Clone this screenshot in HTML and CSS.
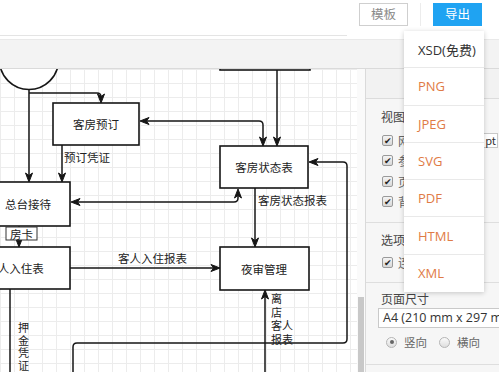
FILE: index.html
```html
<!DOCTYPE html>
<html lang="zh-CN">
<head>
<meta charset="utf-8">
<title>流程图编辑器</title>
<link rel="stylesheet" href="styles.css">
</head>
<body>
<header class="topbar">
  <div class="tabs"></div>
  <div class="actions">
    <div class="btn btn-ghost">模板</div>
    <div class="divider"></div>
    <div class="btn btn-primary">导出</div>
  </div>
</header>
<div class="toolbar"></div>
<div class="main">
  <div class="canvas">
    <svg class="diagram" width="357" height="372" viewBox="0 0 357 372" xmlns="http://www.w3.org/2000/svg">
      <g class="shapes">
        <circle cx="29" cy="60" r="29.5"/>
        <rect x="220" y="10" width="90" height="60"/>
        <rect x="53" y="103" width="86" height="42"/>
        <rect x="220" y="146" width="88" height="42"/>
        <rect x="-16" y="182" width="86" height="44"/>
        <rect x="-40" y="247" width="110" height="42"/>
        <rect x="220" y="247" width="89" height="43"/>
      </g>
      <g class="edges">
        <path d="M29 90 V176"/>
        <path d="M29 93 H97 Q101 93 101 97 V97"/>
        <path d="M62 145 V176"/>
        <path d="M146 121 H259 Q263 121 263 125 V140"/>
        <path d="M277 70 V140"/>
        <path d="M77 202 H234 Q238 202 238 198 V195"/>
        <path d="M315 162 H343 Q347 162 347 166 V339 Q347 343 343 343 H77 Q73 343 73 347 V380"/>
        <path d="M19 226 V241"/>
        <path d="M70 268 H214"/>
        <path d="M255 188 V241"/>
        <path d="M265 380 V296"/>
        <path d="M10 289 V380"/>
      </g>
      <g class="heads">
        <path d="M29 182 L25.5 173 L29 175.5 L32.5 173 Z"/>
        <path d="M101 103 L97.5 94 L101 96.5 L104.5 94 Z"/>
        <path d="M62 182 L58.5 173 L62 175.5 L65.5 173 Z"/>
        <path d="M140 121 L149 117.5 L146.5 121 L149 124.5 Z"/>
        <path d="M263 146 L259.5 137 L263 139.5 L266.5 137 Z"/>
        <path d="M277 146 L273.5 137 L277 139.5 L280.5 137 Z"/>
        <path d="M71 202 L80 198.5 L77.5 202 L80 205.5 Z"/>
        <path d="M238 189 L234.5 198 L238 195.5 L241.5 198 Z"/>
        <path d="M309 162 L318 158.5 L315.5 162 L318 165.5 Z"/>
        <path d="M19 247 L15.5 238 L19 240.5 L22.5 238 Z"/>
        <path d="M220 268 L211 264.5 L213.5 268 L211 271.5 Z"/>
        <path d="M255 247 L251.5 238 L255 240.5 L258.5 238 Z"/>
        <path d="M265 290 L261.5 299 L265 296.5 L268.5 299 Z"/>
      </g>
      <rect class="tag" x="6" y="227" width="31" height="13"/>
      <g class="labels">
        <text class="mid" x="96" y="124">客房预订</text>
        <text class="mid" x="264" y="167">客房状态表</text>
        <text class="mid" x="28" y="204">总台接待</text>
        <text class="mid" x="15" y="268">客人入住表</text>
        <text class="mid" x="264" y="269">夜审管理</text>
        <text class="mid" x="21.5" y="233.5">房卡</text>
        <text class="left" x="64" y="157">预订凭证</text>
        <text class="left" x="258" y="200">客房状态报表</text>
        <text class="left" x="118" y="258">客人入住报表</text>
        <text class="left stack" x="271" y="298">离</text>
        <text class="left stack" x="271" y="311.5">店</text>
        <text class="left stack" x="271" y="325">客人</text>
        <text class="left stack" x="271" y="338.5">报表</text>
        <text class="left stack" x="18" y="327">押</text>
        <text class="left stack" x="18" y="339.5">金</text>
        <text class="left stack" x="18" y="352">凭</text>
        <text class="left stack" x="18" y="364.5">证</text>
      </g>
    </svg>
  </div>
  <div class="scroll"><div class="thumb"></div></div>
  <aside class="panel">
    <div class="p-head"></div>
    <section class="sec sec-view">
      <div class="sec-title">视图</div>
      <div class="rows">
        <label class="row"><span class="cb">✔</span><span class="txt">网格</span><span class="size">10 pt</span><span class="size2">3</span></label>
        <label class="row"><span class="cb">✔</span><span class="txt">参考线</span></label>
        <label class="row"><span class="cb">✔</span><span class="txt">页面视图</span></label>
        <label class="row"><span class="cb">✔</span><span class="txt">背景</span></label>
      </div>
    </section>
    <section class="sec sec-opt">
      <div class="sec-title">选项</div>
      <label class="row"><span class="cb">✔</span><span class="txt">连接箭头</span></label>
    </section>
    <section class="sec sec-page">
      <div class="sec-title">页面尺寸</div>
      <div class="select">A4 (210 mm x 297 mm)</div>
      <div class="radios">
        <span class="radio on"></span><span class="rtxt">竖向</span>
        <span class="radio"></span><span class="rtxt">横向</span>
      </div>
    </section>
  </aside>
</div>
<ul class="menu">
  <li class="menu-item first">XSD(免费)</li>
  <li class="menu-item">PNG</li>
  <li class="menu-item">JPEG</li>
  <li class="menu-item">SVG</li>
  <li class="menu-item">PDF</li>
  <li class="menu-item">HTML</li>
  <li class="menu-item last">XML</li>
</ul>
</body>
</html>
```
FILE: styles.css
```css
* { box-sizing: border-box; }

body {
  margin: 0;
  width: 499px;
  height: 372px;
  overflow: hidden;
  position: relative;
  background: #fff;
  font-family: "Noto Sans CJK SC", "Open Sans", sans-serif;
  color: #333;
}

/* top bar */
.topbar {
  height: 39px;
  display: flex;
  align-items: flex-start;
  background: #fff;
}
.tabs {
  width: 347px;
  height: 36px;
  border-bottom: 1px solid #e4e4e4;
}
.actions {
  display: flex;
  gap: 12px;
  margin-left: 12px;
  padding-top: 3px;
}
.btn {
  width: 49px;
  height: 23px;
  display: flex;
  align-items: center;
  justify-content: center;
  font-size: 12.5px;
  line-height: 1;
}
.btn-ghost {
  border: 1px solid #cfcfcf;
  color: #8a8a8a;
  background: #fff;
}
.btn-primary {
  background: #1fa3f2;
  color: #fff;
}
.divider {
  width: 1px;
  height: 23px;
  background: #ececec;
}

/* toolbar */
.toolbar {
  height: 30px;
  background: #f3f3f3;
  border-top: 1px solid #e9e9e9;
  border-bottom: 1px solid #dadada;
}

/* main */
.main {
  display: flex;
  height: 303px;
}
.canvas {
  width: 357px;
  flex: none;
  position: relative;
  overflow: hidden;
  background-color: #fff;
  background-image:
    linear-gradient(#ececec 1px, transparent 1px),
    linear-gradient(90deg, #ececec 1px, transparent 1px);
  background-size: 14px 14px;
  background-position: 0 0;
}
.diagram {
  position: absolute;
  left: 0;
  top: -69px;
}
.shapes circle,
.shapes rect {
  fill: #fff;
  stroke: #161616;
  stroke-width: 1.6;
}
.edges path {
  fill: none;
  stroke: #161616;
  stroke-width: 1.5;
}
.heads path {
  fill: #161616;
  stroke: #161616;
  stroke-width: 1;
  stroke-linejoin: miter;
}
.tag {
  fill: #fff;
  stroke: #333;
  stroke-width: 1;
}
.labels text {
  font-family: "Noto Sans CJK SC", sans-serif;
  font-size: 11.5px;
  fill: #222;
  dominant-baseline: central;
}
.labels .mid { text-anchor: middle; }
.labels .left { text-anchor: start; }
.labels .stack { font-size: 11px; }

/* scrollbar */
.scroll {
  width: 8px;
  flex: none;
  background: #fafafa;
  display: flex;
  flex-direction: column;
  justify-content: flex-end;
}
.thumb {
  width: 6px;
  height: 75px;
  margin-left: 1px;
  background: #c8c8c8;
}

/* side panel */
.panel {
  flex: 1;
  min-width: 0;
  overflow: hidden;
  background: #f6f6f6;
  border-left: 1px solid #dadada;
  font-size: 12px;
  color: #555;
}
.p-head {
  height: 30px;
  background: #f2f2f2;
  border-bottom: 1px solid #dcdcdc;
}
.sec {
  padding-left: 15px;
  border-bottom: 1px solid #dedede;
}
.sec-title {
  height: 16px;
  line-height: 16px;
  font-size: 12px;
  color: #444;
  white-space: nowrap;
}
.sec-view { padding-top: 10px; padding-bottom: 10px; }
.sec-view .rows { margin-top: 5px; }
.sec-view .row { height: 20.5px; }
.sec-opt { padding-top: 9px; padding-bottom: 10px; }
.sec-opt .row { margin-top: 4px; height: 20px; }
.sec-page { padding-top: 8px; padding-bottom: 13px; }

.row {
  display: flex;
  align-items: center;
  white-space: nowrap;
}
.cb {
  width: 11px;
  height: 11px;
  flex: none;
  margin-left: 1px;
  border: 1px solid #9a9a9a;
  border-radius: 2px;
  background: linear-gradient(#f4f4f4, #d8d8d8);
  font-size: 9px;
  line-height: 9px;
  color: #222;
  text-align: center;
}
.txt {
  margin-left: 5px;
  color: #666;
  font-size: 12px;
}
.size {
  margin-left: 36px;
  width: 40px;
  height: 15px;
  border: 1px solid #c8c8c8;
  background: #fff;
  font-size: 11px;
  line-height: 13px;
  text-align: right;
  padding-right: 1px;
  color: #333;
  flex: none;
}
.size2 {
  margin-left: 2px;
  font-size: 11px;
  color: #333;
}
.select {
  margin-top: 1px;
  margin-left: -3px;
  width: 140px;
  height: 20px;
  border: 1px solid #c9c9c9;
  background: #fff;
  font-family: "Open Sans", "Noto Sans CJK SC", sans-serif;
  font-size: 12.5px;
  line-height: 18px;
  padding-left: 4px;
  color: #333;
  white-space: nowrap;
  overflow: hidden;
}
.radios {
  margin-top: 5px;
  height: 18px;
  display: flex;
  align-items: center;
  padding-left: 5px;
}
.radio {
  width: 11px;
  height: 11px;
  border-radius: 50%;
  border: 1px solid #b5b5b5;
  background: linear-gradient(#fafafa, #dedede);
  position: relative;
  flex: none;
}
.radio.on::after {
  content: "";
  position: absolute;
  left: 2.5px;
  top: 2.5px;
  width: 4px;
  height: 4px;
  border-radius: 50%;
  background: #666;
}
.rtxt {
  margin-left: 7px;
  margin-right: 12px;
  color: #666;
  font-size: 11.5px;
}

/* export dropdown */
.menu {
  position: absolute;
  left: 404px;
  top: 31px;
  width: 80px;
  margin: 0;
  padding: 0;
  list-style: none;
  background: #fff;
  box-shadow: 0 1px 5px rgba(0, 0, 0, 0.2);
}
.menu-item {
  height: 37.3px;
  display: flex;
  align-items: center;
  padding-left: 14px;
  font-family: "Open Sans", "Noto Sans CJK SC", sans-serif;
  font-size: 13px;
  color: #df7b46;
  border-bottom: 1px solid #e9e9e9;
  white-space: nowrap;
}
.menu-item.first { color: #333; }
.menu-item.last { border-bottom: none; }
```
